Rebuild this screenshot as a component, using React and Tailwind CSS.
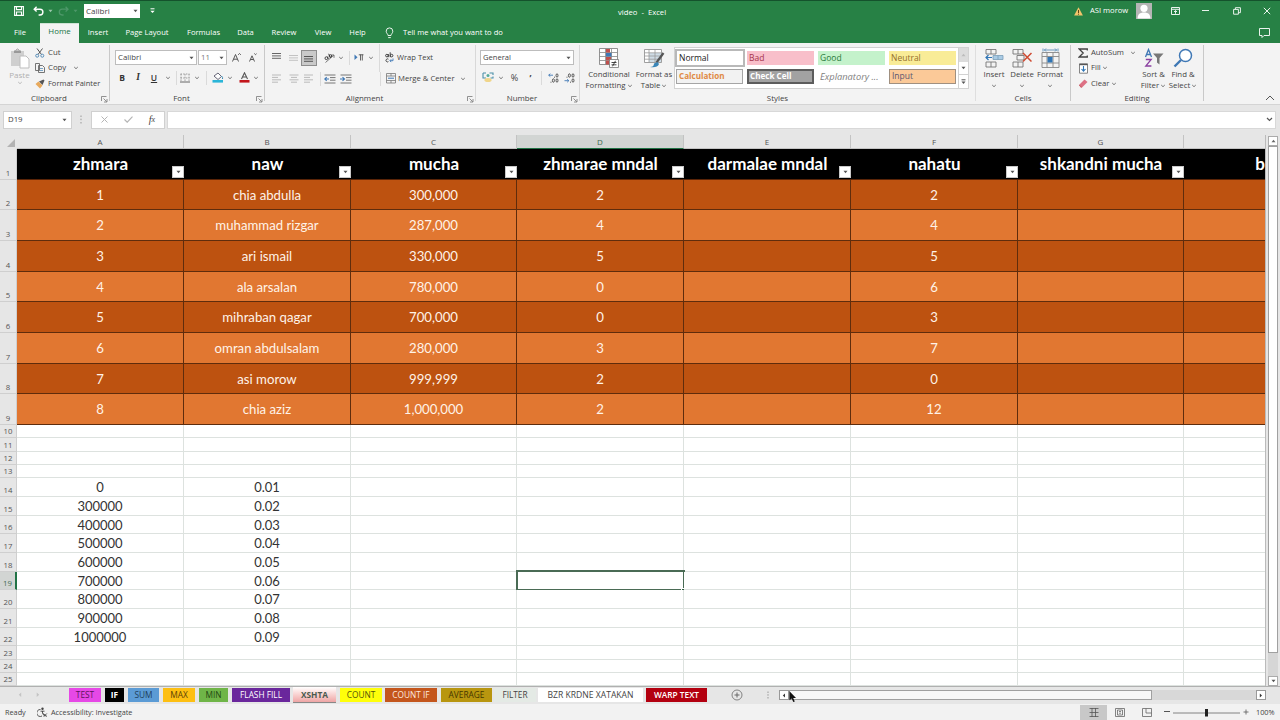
import React from "react";

const UI = "font-['Open_Sans','Noto_Sans',sans-serif]";
const CELL = "font-['Lato','Open_Sans',sans-serif]";

function Svg({ w, h, children, className = "" }) {
  return (
    <svg width={w} height={h} viewBox={`0 0 ${w} ${h}`} fill="none" className={`shrink-0 ${className}`}>
      {children}
    </svg>
  );
}

/* A centred slot of fixed width used in toolbars */
function Slot({ w, children, className = "" }) {
  return <div className={`flex shrink-0 items-center justify-center whitespace-nowrap ${w} ${className}`}>{children}</div>;
}

function Caret({ color = "#777" }) {
  return (
    <Svg w={6} h={4}>
      <path d="M1.2 1l1.8 1.7L4.8 1" stroke={color} strokeWidth="1" />
    </Svg>
  );
}

function Tri({ color = "#555" }) {
  return (
    <Svg w={5} h={4}>
      <path d="M0.5 0.7h4L2.5 3.2z" fill={color} />
    </Svg>
  );
}

function Launcher() {
  return (
    <Svg w={7} h={7}>
      <path d="M0.5 5V0.5H5.5M2.5 2.5l3.2 3.2M6 3v3H3" stroke="#777" strokeWidth="0.8" />
    </Svg>
  );
}

function Sep({ h = "h-[14px]" }) {
  return <div className={`w-px shrink-0 bg-[#dadada] ${h}`} />;
}

function Group({ w, label, launcher, line = "bg-[#c9c9c9]", children }) {
  return (
    <div className={`flex h-[61px] shrink-0 ${w}`}>
      <div className="flex min-w-0 flex-1 flex-col">
        <div className="h-[50px]">{children}</div>
        <div className="flex h-[10px] items-center">
          <div className={`flex-1 text-center text-[7.9px] leading-[10px] text-[#444] ${launcher ? "pr-[3px]" : ""}`}>{label}</div>
          {launcher && <div className="mr-px mt-[2px]"><Launcher /></div>}
        </div>
      </div>
      <div className={`mt-[2px] h-[56px] w-px ${line}`} />
    </div>
  );
}

function AlignIcon({ widths, y = 1, center, color = "#777" }) {
  return (
    <Svg w={10} h={10}>
      {widths.map((n, i) => (
        <rect key={i} x={center ? (10 - n) / 2 : 0} y={y + i * 2.4} width={n} height="1" fill={color} />
      ))}
    </Svg>
  );
}

function TitleBar() {
  return (
    <div className="flex h-[23px] items-center border-t border-[#14522c] pb-[2px] text-[7.6px] text-white">
      <Slot w="w-[38px]">
        <Svg w={10} h={10}>
          <path d="M0.6 0.6h8.8v8.8H0.6zM2.5 0.6v3h5v-3M2.5 9.4V6h5v3.4" stroke="#fff" strokeWidth="1.1" />
        </Svg>
      </Slot>
      <Svg w={12} h={10} className="-ml-[5px]">
        <path d="M3.6 0.8L1.2 3.2l2.4 2.4M1.4 3.2H7a2.8 2.8 0 010 5.8H5.6" stroke="#fff" strokeWidth="1.4" />
      </Svg>
      <Slot w="w-[10px]"><Tri color="#9cc8ad" /></Slot>
      <Svg w={12} h={10} className="ml-[3px]">
        <path d="M7.6 0.8L10 3.2 7.6 5.6M9.8 3.2H4.2a2.8 2.8 0 000 5.8h1.4" stroke="#4d9769" strokeWidth="1.3" />
      </Svg>
      <Slot w="w-[10px]"><Tri color="#4d9769" /></Slot>
      <div className="ml-[4px] flex h-[14px] w-[56px] items-center justify-between bg-white pl-[2px] pr-[2px] text-[8px] text-[#444]">
        <span>Calibri</span><Tri />
      </div>
      <Slot w="w-[25px]">
        <Svg w={5} h={6}>
          <path d="M0.5 0.8h4" stroke="#fff" strokeWidth="1" /><path d="M0.3 2.8h4.4L2.5 5z" fill="#fff" />
        </Svg>
      </Slot>
      <span className="ml-[453px] mt-[3px] w-[60px] shrink-0 whitespace-nowrap text-[7.7px]">video&nbsp; - &nbsp;Excel</span>
      <span className="ml-[396px]">
        <Svg w={9} h={9}><path d="M4.5 0.3L8.9 8.6H0.1z" fill="#f2c46b" /><path d="M4.5 3v3M4.5 6.7v1" stroke="#5b4516" strokeWidth="1" /></Svg>
      </span>
      <span className="ml-[7px] w-[46px] shrink-0 whitespace-nowrap">ASI morow</span>
      <div className="h-[16px] w-[16px] shrink-0 bg-[#b5b5b5]">
        <Svg w={16} h={16}><circle cx="8" cy="5.3" r="3.6" fill="#fff" /><path d="M1.6 15.5c0-4 2-6 6.4-6s6.4 2 6.4 6z" fill="#fff" /></Svg>
      </div>
      <Slot w="w-[46px]">
        <Svg w={9} h={8}><path d="M0.5 0.5h8v7h-8zM0.5 2.3h8M4.5 6.8V3.6M3 5l1.5-1.5L6 5" stroke="#e9f3ec" strokeWidth="1" /></Svg>
      </Slot>
      <Slot w="w-[15px]"><Svg w={7} h={8}><path d="M0 3.5h7" stroke="#e9f3ec" /></Svg></Slot>
      <Slot w="w-[47px]">
        <Svg w={8} h={8}><path d="M0.6 2.4h4.8v4.8H0.6zM2.4 2.2V0.7h5v5H5.6" stroke="#e9f3ec" strokeWidth="1" /></Svg>
      </Slot>
      <Slot w="w-[14px]"><Svg w={8} h={8}><path d="M0.8 0.8l6.4 6.4M7.2 0.8L0.8 7.2" stroke="#e9f3ec" strokeWidth="1" /></Svg></Slot>
    </div>
  );
}

const menu = [
  ["Insert", "w-[38px]"],
  ["Page Layout", "w-[60px]"],
  ["Formulas", "w-[53px]"],
  ["Data", "w-[31px]"],
  ["Review", "w-[46px]"],
  ["View", "w-[32px]"],
  ["Help", "w-[37px]"],
];

function MenuBar() {
  return (
    <div className="flex h-[20px] items-stretch text-[7.6px] text-white">
      <Slot w="w-[40px]" className="pb-px">File</Slot>
      <Slot w="w-[39px]" className="border-t border-[#cfe3d5] bg-[#f3f3f3] pb-[3px] text-[7.9px] text-[#217346]">Home</Slot>
      {menu.map(([t, w]) => <Slot key={t} w={w} className="pb-px">{t}</Slot>)}
      <Slot w="w-[27px]">
        <Svg w={9} h={12}><path d="M3 8.5C3 7 1.2 6.3 1.2 4.2a3.3 3.3 0 016.6 0C7.8 6.3 6 7 6 8.5zM3.2 10.6h2.6" stroke="#fff" strokeWidth="0.9" /></Svg>
      </Slot>
      <span className="flex flex-1 items-center whitespace-nowrap pb-px">Tell me what you want to do</span>
      <Slot w="w-[32px]" className="pb-px">
        <Svg w={11} h={10}><path d="M0.5 0.5h10v7H5L3 9.5v-2H0.5z" stroke="#fff" strokeWidth="0.9" /></Svg>
      </Slot>
    </div>
  );
}

function ClipboardGroup() {
  return (
    <Group w="w-[110px]" label="Clipboard" launcher>
      <div className="flex">
        <div className="ml-[4px] flex w-[31px] flex-col items-center pt-[5px] text-[8px] text-[#b0b0b0]">
          <Svg w={21} h={21}>
            <path d="M2 3h13v15H2z" fill="#cfcfcf" /><path d="M5 2.5h7V5H5z" fill="#999" /><path d="M6.5 2.5q2-3 4 0" stroke="#999" />
            <path d="M11 8h6l3 3v9h-9z" fill="#fff" stroke="#bdbdbd" />
          </Svg>
          <span className="mt-[1px] leading-[10px]">Paste</span>
          <span className="mt-[1px]"><Caret color="#bbb" /></span>
        </div>
        <div className="flex flex-col pt-[2px] text-[7.8px] text-[#444]">
          <div className="flex h-[15.5px] items-center">
            <Svg w={10} h={10}><path d="M2 0.5l4.5 6M7.5 0.5L3 6.5" stroke="#555" /><circle cx="2.2" cy="7.7" r="1.5" stroke="#5b8fb9" /><circle cx="7.3" cy="7.7" r="1.5" stroke="#5b8fb9" /></Svg>
            <span className="ml-[3px]">Cut</span>
          </div>
          <div className="flex h-[15.5px] items-center">
            <Svg w={10} h={10}><path d="M0.5 0.5h4v7h-4zM3.5 2.5h4l2 2v5h-6z" fill="#f3f3f3" stroke="#666" strokeWidth="0.9" /><path d="M5 5.5h3M5 7.5h3" stroke="#5b8fb9" strokeWidth="0.8" /></Svg>
            <span className="ml-[3px] w-[25px]">Copy</span><Caret />
          </div>
          <div className="flex h-[15.5px] items-center whitespace-nowrap">
            <Svg w={10} h={10}><path d="M0.5 5l3-2.5 4 4L5 9.5z" fill="#e8a95c" /><path d="M4 2.5L8.5 0.5l1 1L7.5 6z" fill="#555" /></Svg>
            <span className="ml-[3px] text-[7.5px]">Format Painter</span>
          </div>
        </div>
      </div>
    </Group>
  );
}

function FontGroup() {
  return (
    <Group w="w-[155px]" label="Font" launcher>
      <div className="flex items-center pt-[7px] text-[7.8px] text-[#444]">
        <div className="ml-[5px] flex h-[15px] w-[82px] items-center justify-between border border-[#bdbdbd] bg-white pl-[2px] pr-[2px]">
          <span>Calibri</span><Tri />
        </div>
        <div className="ml-px flex h-[15px] w-[29px] items-center justify-between border border-[#bdbdbd] bg-white pl-[2px] pr-[2px] text-[#777]">
          <span>11</span><Tri />
        </div>
        <Slot w="w-[18px]"><Svg w={9} h={9}><path d="M0.5 8.5L3.5 1.5l3 7M1.6 6.2h3.8M6.2 1.8L7.5 0.5 8.8 1.8" stroke="#555" /></Svg></Slot>
        <Slot w="w-[16px]"><Svg w={8} h={9}><path d="M0.5 8.5L3 2.8l2.5 5.7M1.5 6.5h3M5.3 0.5L6.5 1.7 7.7 0.5" stroke="#555" /></Svg></Slot>
      </div>
      <div className="flex items-center pt-[5px] text-[8.5px] leading-[15px] text-[#333]">
        <Slot w="w-[24px]" className="font-bold">B</Slot>
        <Slot w="w-[8px]" className="font-['Liberation_Serif',serif] text-[9.5px] font-bold italic">I</Slot>
        <Slot w="w-[24px]" className="font-semibold underline">U</Slot>
        <Slot w="w-[3px]"><Caret /></Slot>
        <Slot w="w-[15px]"><Sep /></Slot>
        <Svg w={10} h={10} className="-ml-[4px]"><path d="M0.5 1h9M0.5 5h9M1 1v8M5 1v8M9 1v8" stroke="#888" strokeDasharray="1.5 1.2" strokeWidth="0.8" /><path d="M0 9h10" stroke="#666" /></Svg>
        <Slot w="w-[14px]"><Caret /></Slot>
        <Slot w="w-[5px]"><Sep /></Slot>
        <Slot w="w-[18px]"><Svg w={12} h={11}><path d="M2 4l4-3 3.5 3.5L6 7.5z" fill="#fff" stroke="#667" /><path d="M9.5 4q1.6 1.5 1 3" stroke="#3a8bb5" /><path d="M0.5 8H11v2.6H0.5z" fill="#2bb5d8" /></Svg></Slot>
        <Slot w="w-[6px]"><Caret /></Slot>
        <Slot w="w-[22px]"><Svg w={11} h={11}><path d="M2.5 7L5.5 0.8 8.5 7M3.6 5h3.8" stroke="#555" strokeWidth="1.1" /><path d="M0.5 8h10v2.6h-10z" fill="#c3161c" /></Svg></Slot>
        <Slot w="w-[2px]"><Caret /></Slot>
      </div>
    </Group>
  );
}

function IndentIcon({ flip }) {
  return (
    <Svg w={12} h={10}>
      <path d="M0.5 1h11M6 3.6h5.5M6 6.2h5.5M0.5 9h11" stroke="#777" strokeWidth="1" />
      <path d={flip ? "M0 5h4M2.5 3.2L4.5 5 2.5 6.8" : "M1 5h4M2.7 3.2L0.8 5l1.9 1.8"} stroke="#3f78b5" strokeWidth="1.1" />
    </Svg>
  );
}

function AlignmentGroup() {
  return (
    <Group w="w-[211px]" label="Alignment" launcher line="bg-[#d8d8d8]">
      <div className="flex h-[29px] items-center text-[7.6px] text-[#444]">
        <Slot w="w-[24px]"><AlignIcon widths={[9, 9, 9]} y={0} color="#666" /></Slot>
        <Slot w="w-[10px]"><AlignIcon widths={[9, 9, 9]} y={2} color="#c2c2c2" /></Slot>
        <div className="ml-[2px] flex h-[16px] w-[16px] items-center justify-center border border-[#8d8d8d] bg-[#c9c9c9]"><AlignIcon widths={[9, 9, 9]} y={3} color="#555" /></div>
        <Slot w="w-[24px]">
          <Svg w={11} h={10}>
            <path d="M1.5 9.5L10 2M10 4.8V2H7.2" stroke="#777" />
            <circle cx="2.4" cy="5.2" r="1.4" stroke="#333" strokeWidth="0.9" /><path d="M3.4 3.6l1 2.2M4.6 0.8l2 4" stroke="#333" strokeWidth="0.9" /><circle cx="6.4" cy="3" r="1.3" stroke="#333" strokeWidth="0.9" />
          </Svg>
        </Slot>
        <Slot w="w-[2px]" className="-ml-px"><Caret /></Slot>
        <Slot w="w-[14px]"><Sep /></Slot>
        <Slot w="w-[6px]"><Svg w={10} h={8}><path d="M0.5 0.5V6l3-2.8z" fill="#3f78b5" /><path d="M6.5 0.5v6M8.3 0.5v6M4.8 0.8h4.7" stroke="#555" strokeWidth="0.9" /></Svg></Slot>
        <Slot w="w-[18px]"><Caret /></Slot>
        <Slot w="w-px" className="-ml-px"><Sep h="h-[28px]" /></Slot>
        <Slot w="w-[18px]">
          <Svg w={9} h={11}>
            <circle cx="1.9" cy="3.6" r="1.3" stroke="#333" strokeWidth="0.9" /><path d="M3.3 2v3.2M5.2 0.3v4.9" stroke="#333" strokeWidth="0.9" /><circle cx="6.6" cy="3.6" r="1.3" stroke="#333" strokeWidth="0.9" />
            <path d="M3.4 7.2a1.5 1.5 0 100 2.4" stroke="#333" strokeWidth="0.9" /><path d="M8 6.5v2.2H5M6.2 7.3L4.9 8.7l1.3 1.4" stroke="#3f78b5" strokeWidth="0.9" />
          </Svg>
        </Slot>
        <span className="-ml-[1px] whitespace-nowrap">Wrap Text</span>
      </div>
      <div className="flex h-[13px] items-center text-[7.6px] text-[#444]">
        <Slot w="w-[24px]"><AlignIcon widths={[9, 6, 9, 6]} y={0.5} color="#bbb" /></Slot>
        <Slot w="w-[10px]"><AlignIcon widths={[9, 6, 9, 6]} center y={0.5} color="#bbb" /></Slot>
        <Slot w="w-[20px]"><AlignIcon widths={[9, 6, 9, 6]} y={0.5} color="#bbb" /></Slot>
        <Slot w="w-[3px]"><Sep /></Slot>
        <Slot w="w-[16px]"><IndentIcon /></Slot>
        <Slot w="w-[16px]"><IndentIcon flip /></Slot>
        <div className="ml-[26px]"><Sep /></div>
        <Svg w={10} h={11} className="ml-[5px]"><path d="M0.5 0.5h9V10h-9zM0.5 3h9M0.5 7.5h9M5 0.5V3M5 7.5V10" stroke="#777" strokeWidth="0.8" /><path d="M2 5.2h6" stroke="#3f78b5" /></Svg>
        <span className="ml-[2px] w-[62px] whitespace-nowrap text-[7.7px]">Merge &amp; Center</span><Caret />
      </div>
    </Group>
  );
}

/* Decimal-places icon: an arrow with rows of zeros */
function DecimalIcon({ more }) {
  return (
    <Svg w={11} h={10}>
      {more ? (
        <>
          <path d="M5 2.2H0.7M2.3 0.7L0.7 2.2l1.6 1.5" stroke="#3f78b5" strokeWidth="0.9" />
          <path d="M6.2 4.2H7M2.6 9.2h0.8" stroke="#333" strokeWidth="1" />
          <ellipse cx="9" cy="2.5" rx="1" ry="1.7" stroke="#333" strokeWidth="0.8" /><ellipse cx="5.4" cy="7.5" rx="1" ry="1.7" stroke="#333" strokeWidth="0.8" /><ellipse cx="9" cy="7.5" rx="1" ry="1.7" stroke="#333" strokeWidth="0.8" />
        </>
      ) : (
        <>
          <path d="M0.5 7.7h4.3M3.2 6.2l1.6 1.5-1.6 1.5" stroke="#3f78b5" strokeWidth="0.9" />
          <path d="M2.6 4.2h0.8M6.2 9.2H7" stroke="#333" strokeWidth="1" />
          <ellipse cx="5.4" cy="2.5" rx="1" ry="1.7" stroke="#333" strokeWidth="0.8" /><ellipse cx="9" cy="2.5" rx="1" ry="1.7" stroke="#333" strokeWidth="0.8" /><ellipse cx="9" cy="7.5" rx="1" ry="1.7" stroke="#333" strokeWidth="0.8" />
        </>
      )}
    </Svg>
  );
}

function NumberGroup() {
  return (
    <Group w="w-[104px]" label="Number" launcher line="bg-[#d8d8d8]">
      <div className="pt-[7px]">
        <div className="ml-[4px] flex h-[15px] w-[94px] items-center justify-between border border-[#bdbdbd] bg-white pl-[2px] pr-[2px] text-[7.6px] text-[#444]">
          <span>General</span><Tri />
        </div>
      </div>
      <div className="flex items-center pt-[5px] text-[9px] leading-[15px] text-[#444]">
        <Slot w="w-[24px]"><Svg w={12} h={11}><path d="M1 1h3M7.5 1H11v2M1 1v5h3M11 4.5V6H8.5" stroke="#4a8fa8" strokeWidth="1.1" /><circle cx="6" cy="3.6" r="1.5" fill="#5a9" /><ellipse cx="6" cy="8" rx="3.6" ry="2" fill="#f0d58a" /></Svg></Slot>
        <Slot w="w-[2px]"><Caret /></Slot>
        <Slot w="w-[25px]">%</Slot>
        <Slot w="w-[7px]" className="font-bold">’</Slot>
        <Slot w="w-[14px]"><Sep /></Slot>
        <DecimalIcon more />
        <div className="w-[5px]" />
        <DecimalIcon />
      </div>
    </Group>
  );
}

function BigButton({ icon, lines, w, caretLine }) {
  return (
    <div className={`flex shrink-0 flex-col items-center whitespace-nowrap pt-[4px] text-[7.8px] leading-[11px] text-[#444] ${w}`}>
      <div className="flex h-[22px] items-center">{icon}</div>
      <span>{lines[0]}</span>
      {caretLine ? <span className="flex h-[11px] items-center"><Caret /></span> : <span className="flex items-center gap-[1px]">{lines[1]}<Caret /></span>}
    </div>
  );
}

function StylesGroup() {
  return (
    <Group w="w-[396px]" label="Styles" line="bg-[#dedede]">
      <div className="flex">
        <BigButton w="w-[58px]" lines={["Conditional", "Formatting"]} icon={
          <Svg w={20} h={20}>
            <path d="M0.5 0.5h18v16h-18z" fill="#fff" stroke="#777" strokeWidth="0.8" />
            <path d="M0.5 4.5h18M0.5 8.5h18M0.5 12.5h18M6.5 0.5v16M12.5 0.5v16" stroke="#888" strokeWidth="0.8" />
            <path d="M7 1h4v3.5H7zM7 9h5v3.5H7zM7 13h3v3.5H7z" fill="#c0504d" /><path d="M7 5h5.5v3.5H7z" fill="#3f78b5" />
            <path d="M10.5 11.5h9v8h-9z" fill="#fff" stroke="#777" strokeWidth="0.8" /><path d="M12.5 14.5h5M12.5 16.8h5M16.5 12.8l-3 5.5" stroke="#333" strokeWidth="0.9" />
          </Svg>} />
        <BigButton w="w-[32px]" lines={["Format as", "Table"]} icon={
          <Svg w={21} h={20}>
            <path d="M0.5 1.5h17v13h-17z" fill="#fff" stroke="#888" strokeWidth="0.8" /><path d="M5 5h12v9H5z" fill="#cfdce6" />
            <path d="M0.5 4.8h17M0.5 8h17M0.5 11.2h17M5 1.5v13M11 1.5v13" stroke="#999" strokeWidth="0.8" />
            <path d="M19.5 5l-7 9.5" stroke="#555" strokeWidth="2.2" /><path d="M6 19q4 0 4-3.5l3.5-1.5 1.5 2q-1.5 4-9 3z" fill="#3a86b8" />
          </Svg>} />
        <div className="ml-[4px] mt-[4px] flex h-[42px] w-[295px] border border-[#d2d2d2] bg-white text-[8.5px]">
          <div className="grid w-[283px] grid-cols-[72px_71px_71px_69px] grid-rows-[20px_20px]">
            <div className="mt-px flex h-[18px] w-[70px] items-center border-2 border-[#b9b9b9] bg-white pl-[2px] text-[#222]">Normal</div>
            <div className="mt-[3px] flex h-[14px] w-[67px] items-center bg-[#f8bfca] pl-[2px] text-[#a5324a]">Bad</div>
            <div className="mt-[3px] flex h-[14px] w-[67px] items-center bg-[#c4f2cb] pl-[2px] text-[#2b7a3b]">Good</div>
            <div className="mt-[3px] flex h-[14px] w-[67px] items-center bg-[#f9ec97] pl-[2px] text-[#95702a]">Neutral</div>
            <div className="ml-px mt-px flex h-[15px] w-[67px] items-center border border-[#a5a5a5] bg-[#f2f2f2] pl-[2px] text-[8.1px] font-bold text-[#e08a45]">Calculation</div>
            <div className="mt-px flex h-[15px] w-[67px] items-center border-2 border-[#5c5c5c] bg-[#a2a2a2] pl-px text-[8.1px] font-bold text-white">Check Cell</div>
            <div className="mt-px flex h-[15px] w-[67px] items-center whitespace-nowrap pl-[2px] text-[9.3px] italic text-[#808080]">Explanatory ...</div>
            <div className="mt-px flex h-[15px] w-[67px] items-center border border-[#a09080] bg-[#fbc998] pl-[2px] text-[#5d5670]">Input</div>
          </div>
          <div className="flex flex-1 flex-col border-l border-[#d2d2d2]">
            <Slot w="w-full" className="h-[14px] bg-[#dcdcdc]"><Svg w={5} h={4}><path d="M0.5 3.2h4L2.5 0.7z" fill="#bbb" /></Svg></Slot>
            <Slot w="w-full" className="h-[13px] border-b border-[#d2d2d2]"><Tri /></Slot>
            <Slot w="w-full" className="h-[13px]"><Svg w={5} h={6}><path d="M0.5 0.8h4" stroke="#555" /><path d="M0.5 2.5h4L2.5 5z" fill="#555" /></Svg></Slot>
          </div>
        </div>
      </div>
    </Group>
  );
}

function CellsGroup() {
  return (
    <Group w="w-[95px]" label="Cells" line="bg-[#c9c9c9]">
      <div className="flex pl-[4px]">
        <BigButton caretLine w="w-[28px]" lines={["Insert"]} icon={
          <Svg w={19} h={19}>
            <path d="M1 0.5h10V5H1zM6 0.5V5M1 13h10v5H1zM6 13v5" stroke="#777" strokeWidth="0.9" />
            <path d="M8 6.5h10v4H8zM13 6.5v4" fill="#a9cbe4" stroke="#7a9db8" strokeWidth="0.8" /><path d="M7 8.5H1M3.5 6L1 8.5 3.5 11" stroke="#2f75b5" strokeWidth="1.2" />
          </Svg>} />
        <BigButton caretLine w="w-[28px]" lines={["Delete"]} icon={
          <Svg w={20} h={19}>
            <path d="M1 0.5h10V5H1zM6 0.5V5M1 13h10v5H1zM6 13v5M5 6.5h7V11H5z" stroke="#777" strokeWidth="0.9" />
            <path d="M11 4l8.5 8.5M19.5 4L11 12.5" stroke="#cf4a31" strokeWidth="1.5" />
          </Svg>} />
        <BigButton caretLine w="w-[28px]" lines={["Format"]} icon={
          <Svg w={19} h={20}>
            <path d="M1 4.5h17v15H1zM1 8.5h17M1 15h17M6 4.5v15M12 4.5v15" stroke="#888" strokeWidth="0.9" />
            <path d="M6.5 9h5v5.5h-5z" fill="#2f75b5" /><path d="M2 0.5v3M17 0.5v3M3 2h13M5 0.5L3.5 2 5 3.5M14 0.5L15.5 2 14 3.5" stroke="#5b8fb9" strokeWidth="0.9" />
          </Svg>} />
      </div>
    </Group>
  );
}

function EditingGroup() {
  return (
    <Group w="w-[133px]" label="Editing" line="bg-[#c9c9c9]">
      <div className="flex">
        <div className="flex w-[67px] flex-col pl-[7px] pt-[2px] text-[7.7px] text-[#444]">
          <div className="flex h-[15.5px] items-center">
            <Svg w={11} h={10}><path d="M9.3 2.5V1H1.2l4 4-4 4h8.1V7.5" stroke="#444" strokeWidth="1.3" /></Svg>
            <span className="ml-[2px] w-[39px] whitespace-nowrap">AutoSum</span><Caret />
          </div>
          <div className="flex h-[15.5px] items-center">
            <Svg w={11} h={11}><path d="M1.5 0.8h8v9.4h-8z" fill="#fff" stroke="#777" strokeWidth="0.9" /><path d="M1.5 1.5h8" stroke="#555" strokeWidth="1.4" /><path d="M5.5 3v5M3.5 6l2 2.2 2-2.2" stroke="#2f75b5" strokeWidth="1.1" /></Svg>
            <span className="ml-[2px] mr-px">Fill</span><Caret />
          </div>
          <div className="flex h-[15.5px] items-center">
            <Svg w={11} h={9}><path d="M1 6l5.5-5.5L9.5 3 4 8.500H2.5z" fill="#dd7184" /><path d="M1 6l3 2.5" stroke="#b55" strokeWidth="0.7" /></Svg>
            <span className="ml-[2px] mr-px">Clear</span><Caret />
          </div>
        </div>
        <BigButton w="w-[31px]" lines={["Sort &", "Filter"]} icon={
          <Svg w={20} h={20}>
            <path d="M1.500 9L4.500 1.500 7.500 9M2.500 6.500h4" stroke="#3f78b5" strokeWidth="1.3" /><path d="M1.800 11.500h5.400L1.800 18h5.600" stroke="#8a3fa0" strokeWidth="1.3" />
            <path d="M9 5.500h10.500l-4 4.500v6.500l-2.500-2V10z" fill="#777" />
          </Svg>} />
        <BigButton w="w-[28px]" lines={["Find &", "Select"]} icon={
          <Svg w={20} h={20}><circle cx="12.5" cy="7.5" r="6" fill="#fff" stroke="#3f78b5" strokeWidth="1.5" /><path d="M8 12l-6.500 6.500" stroke="#3f78b5" strokeWidth="2.4" /></Svg>} />
      </div>
    </Group>
  );
}

function Ribbon() {
  return (
    <div className="flex h-[61px] bg-[#f3f3f3]">
      <ClipboardGroup /><FontGroup /><AlignmentGroup /><NumberGroup /><StylesGroup /><CellsGroup /><EditingGroup />
      <div className="flex flex-1 items-end justify-end pb-[3px] pr-[5px]">
        <Svg w={10} h={6}><path d="M1 5l4-4 4 4" stroke="#555" /></Svg>
      </div>
    </div>
  );
}

function FormulaBar() {
  return (
    <div className="flex h-[31px] items-center border-t border-[#d4d4d4] pb-px text-[7.8px] text-[#444]">
      <div className="ml-[3px] flex h-[18px] w-[69px] items-center justify-between border border-[#d0d0d0] bg-white pl-[4px] pr-[4px]"><span className="pt-px">D19</span><Tri /></div>
      <Slot w="w-[19px]"><Svg w={3} h={9}><path d="M1 0.5V2M1 3.7v1.5M1 7v1.5" stroke="#999" /></Svg></Slot>
      <div className="flex h-[18px] w-[74px] items-center border border-[#d0d0d0] bg-white">
        <Slot w="w-[24px]"><Svg w={7} h={7}><path d="M0.5 0.5l6 6M6.5 0.5l-6 6" stroke="#b5b5b5" /></Svg></Slot>
        <Slot w="w-[24px]"><Svg w={9} h={7}><path d="M0.5 3.5l2.7 2.7L8.5 0.6" stroke="#b5b5b5" strokeWidth="1.2" /></Svg></Slot>
        <Slot w="w-[24px]" className="font-['Liberation_Serif',serif] text-[10px] italic">f<span className="text-[8px]">x</span></Slot>
      </div>
      <div className="ml-[2px] flex h-[18px] w-[1109px] items-center justify-end border border-[#d8d8d8] bg-white pr-[2px]"><Svg w={7} h={5}><path d="M1 1l2.5 2.5L6 1" stroke="#555" strokeWidth="1.2" /></Svg></div>
    </div>
  );
}

/* Column letter, width, heading text */
const columns = [
  { id: "A", w: "w-[167px]", title: "zhmara" },
  { id: "B", w: "w-[167px]", title: "naw" },
  { id: "C", w: "w-[166px]", title: "mucha" },
  { id: "D", w: "w-[167px]", title: "zhmarae mndal" },
  { id: "E", w: "w-[167px]", title: "darmalae mndal" },
  { id: "F", w: "w-[167px]", title: "nahatu" },
  { id: "G", w: "w-[166px]", title: "shkandni mucha" },
];

const dataRows = [
  { n: 2, h: "h-[30px]", v: ["1", "chia abdulla", "300,000", "2", "", "2", ""] },
  { n: 3, h: "h-[31px]", v: ["2", "muhammad rizgar", "287,000", "4", "", "4", ""] },
  { n: 4, h: "h-[31px]", v: ["3", "ari ismail", "330,000", "5", "", "5", ""] },
  { n: 5, h: "h-[30px]", v: ["4", "ala arsalan", "780,000", "0", "", "6", ""] },
  { n: 6, h: "h-[31px]", v: ["5", "mihraban qagar", "700,000", "0", "", "3", ""] },
  { n: 7, h: "h-[31px]", v: ["6", "omran abdulsalam", "280,000", "3", "", "7", ""] },
  { n: 8, h: "h-[30px]", v: ["7", "asi morow", "999,999", "2", "", "0", ""] },
  { n: 9, h: "h-[31px]", v: ["8", "chia aziz", "1,000,000", "2", "", "12", ""] },
];

const plainRows = [
  { n: 10, h: "h-[13px]" },
  { n: 11, h: "h-[14px]" },
  { n: 12, h: "h-[13px]" },
  { n: 13, h: "h-[13px]" },
  { n: 14, h: "h-[19px]", a: "0", b: "0.01" },
  { n: 15, h: "h-[19px]", a: "300000", b: "0.02" },
  { n: 16, h: "h-[18px]", a: "400000", b: "0.03" },
  { n: 17, h: "h-[19px]", a: "500000", b: "0.04" },
  { n: 18, h: "h-[19px]", a: "600000", b: "0.05" },
  { n: 19, h: "h-[18px]", a: "700000", b: "0.06" },
  { n: 20, h: "h-[19px]", a: "800000", b: "0.07" },
  { n: 21, h: "h-[19px]", a: "900000", b: "0.08" },
  { n: 22, h: "h-[18px]", a: "1000000", b: "0.09" },
  { n: 23, h: "h-[14px]" },
  { n: 24, h: "h-[13px]" },
  { n: 25, h: "h-[13px]" },
];

function RowNumber({ n, selected, h }) {
  return (
    <div className={`flex w-[17px] shrink-0 items-end justify-center border-b border-r border-[#cfcfcf] text-[7.8px] leading-[11px] ${h} ${selected ? "border-r-2 border-r-[#217346] bg-[#d2d5d3] text-[#3f6b50]" : "text-[#555]"}`}>
      {n}
    </div>
  );
}

function Sheet() {
  return (
    <div className="flex h-[551px]">
      <div className="flex w-[1265px] flex-col overflow-hidden">
        <div className="flex h-[14px] shrink-0 text-[8px] text-[#555]">
          <div className="flex w-[17px] shrink-0 items-end justify-end pb-[2px] pr-[2px]"><Svg w={8} h={8}><path d="M8 0v8H0z" fill="#b3b3b3" /></Svg></div>
          {columns.map((c) => (
            <div key={c.id} className={`flex shrink-0 items-center justify-center border-r border-b border-[#c3c3c3] ${c.w} ${c.id === "D" ? "border-b-[#217346] bg-[#d2d5d3] text-[#3f6b50]" : ""}`}>{c.id}</div>
          ))}
          <div className="flex-1 border-b border-[#c3c3c3]" />
        </div>
        <div className="flex h-[31px] shrink-0">
          <RowNumber n={1} h="h-[31px]" />
          {columns.map((c) => (
            <div key={c.id} className={`relative flex shrink-0 items-center justify-center whitespace-nowrap border-b border-[#5a2407] bg-black text-[17px] font-bold text-white ${CELL} ${c.w}`}>
              {c.title}
              <span className="absolute bottom-px right-0 flex h-[12px] w-[12px] items-center justify-center border border-[#c9c9c9] bg-white"><Tri /></span>
            </div>
          ))}
          <div className={`flex w-[81px] shrink-0 items-center justify-end overflow-hidden border-b border-[#5a2407] bg-black text-[17px] font-bold text-white ${CELL}`}>b</div>
        </div>
        {dataRows.map((r, i) => (
          <div key={r.n} className={`flex shrink-0 ${r.h}`}>
            <RowNumber n={r.n} h={r.h} />
            {columns.map((c, k) => (
              <div key={c.id} className={`flex shrink-0 items-center justify-center whitespace-nowrap border-b border-r border-[#5f2c0c] pt-[2px] text-[13.2px] text-[#fff3e8] ${CELL} ${c.w} ${i % 2 ? "bg-[#e17731]" : "bg-[#bd5210]"}`}>{r.v[k]}</div>
            ))}
            <div className={`flex-1 border-b border-[#5f2c0c] ${i % 2 ? "bg-[#e17731]" : "bg-[#bd5210]"}`} />
          </div>
        ))}
        {plainRows.map((r) => (
          <div key={r.n} className={`flex shrink-0 ${r.h}`}>
            <RowNumber n={r.n} h={r.h} selected={r.n === 19} />
            {columns.map((c, k) => (
              <div key={c.id} className={`relative flex shrink-0 items-center justify-center border-b border-r border-[#dde2df] bg-white pt-px text-[13px] leading-none text-[#333] ${CELL} ${c.w}`}>
                {k === 0 ? r.a : k === 1 ? r.b : null}
                {r.n === 19 && c.id === "D" && (
                  <div className="absolute -left-px -top-[2px] h-[21px] w-[169px] border-2 border-[#4a6b55]">
                    <span className="absolute -bottom-[3px] -right-[2px] h-[4px] w-[4px] border-l border-t border-white bg-[#2f5a3e]" />
                  </div>
                )}
              </div>
            ))}
            <div className="flex-1 border-b border-[#dde2df] bg-white" />
          </div>
        ))}
      </div>
      <div className="flex w-[15px] flex-col items-center border-l border-[#bbb] pt-px">
        <Slot w="w-[10px]" className="h-[10px] border border-[#ababab] bg-white"><Svg w={5} h={4}><path d="M0.5 3.2h4L2.5 0.7z" fill="#666" /></Svg></Slot>
        <div className="h-[507px] w-[10px] border border-[#a0a0a0] bg-white" />
        <div className="h-[23px] w-[10px] bg-[#d6d6d6]" />
        <Slot w="w-[10px]" className="h-[10px] border border-[#ababab] bg-white"><Tri /></Slot>
      </div>
    </div>
  );
}

const tabs = [
  ["TEST", "w-[32px] mr-[4px] bg-[#e648e6] text-[#5b1460]"],
  ["IF", "w-[19px] mr-[4px] bg-black text-white font-bold"],
  ["SUM", "w-[31px] mr-[4px] bg-[#5b9bd5] text-[#1f3f5c]"],
  ["MAX", "w-[32px] mr-[4px] bg-[#fdbf12] text-[#5a4206]"],
  ["MIN", "w-[29px] mr-[4px] bg-[#6fb548] text-[#234a12]"],
  ["FLASH FILL", "w-[58px] mr-[3px] bg-[#6a279c] text-white"],
];
const tabs2 = [
  ["COUNT", "w-[42px] mr-[3px] bg-[#ffff0a] text-[#55550a]"],
  ["COUNT IF", "w-[52px] mr-[4px] bg-[#c4561c] text-[#fdeadf]"],
  ["AVERAGE", "w-[51px] mr-[2px] bg-[#b8960f] text-[#453700]"],
  ["FILTER", "w-[42px] mr-[2px] bg-[#e4eae5] text-[#444]"],
  ["BZR KRDNE XATAKAN", "w-[105px] mr-[3px] bg-white text-[#444] text-[8.6px]"],
  ["WARP TEXT", "w-[61px] bg-[#b30010] text-white font-semibold"],
];

function TabRow({ items }) {
  return (
    <div className="flex items-center">
      {items.map(([t, c]) => (
        <div key={t} className={`flex h-[14px] shrink-0 items-center justify-center whitespace-nowrap ${c}`}>{t}</div>
      ))}
    </div>
  );
}

function SheetTabs() {
  return (
    <div className="flex h-[18px] border-t border-[#b0b0b0] pb-px text-[8.3px] leading-[12px]">
      <Slot w="w-[69px]" className="gap-[14px] pr-[12px]">
        <Svg w={4} h={6}><path d="M3.2 0.5V5L0.7 2.7z" fill="#c4c4c4" /></Svg>
        <Svg w={4} h={6}><path d="M0.7 0.5V5l2.5-2.3z" fill="#c4c4c4" /></Svg>
      </Slot>
      <TabRow items={tabs} />
      <div className="mr-[4px] flex h-[16px] w-[43px] items-center justify-center border-b border-[#888] bg-linear-to-b from-white to-[#eea5a5] font-bold text-[#4a5a4e]">XSHTA</div>
      <TabRow items={tabs2} />
      <Slot w="w-[59px]"><Svg w={12} h={12}><circle cx="6" cy="6" r="5" stroke="#777" strokeWidth="0.9" /><path d="M6 3.5v5M3.5 6h5" stroke="#666" /></Svg></Slot>
      <Slot w="w-[5px]"><Svg w={3} h={8}><path d="M1 0.5V2M1 3.2v1.5M1 6v1.5" stroke="#999" /></Svg></Slot>
      <div className="ml-[8px] flex items-center">
        <Slot w="w-[10px]" className="h-[10px] border border-[#999] bg-white"><Svg w={4} h={5}><path d="M3 0.5v4l-2.2-2z" fill="#333" /></Svg></Slot>
        <div className="relative h-[10px] w-[363px] border border-[#a0a0a0] bg-[#f8f8f8]">
          <Svg w={8} h={12} className="absolute -left-px top-0"><path d="M0.5 0.3v9l2.2-1.9 1.6 3.7 1.5-0.7-1.6-3.5H7z" fill="#111" /></Svg>
        </div>
        <div className="h-[10px] w-[104px] bg-[#d8d8d8]" />
        <Slot w="w-[10px]" className="h-[10px] border border-[#999] bg-white"><Svg w={4} h={5}><path d="M0.8 0.5v4l2.2-2z" fill="#333" /></Svg></Slot>
      </div>
    </div>
  );
}

function StatusBar() {
  return (
    <div className="flex h-[16px] items-center bg-[#f2f2f2] text-[7.3px] text-[#444]">
      <span className="ml-[5px] w-[32px]">Ready</span>
      <Svg w={11} h={10}><circle cx="5.5" cy="1.7" r="1.2" fill="#444" /><path d="M3.5 2.5A3.5 3.5 0 105 9M3.5 4.2h4M5.5 4v2.5L8 9.5M6 6.5l4 3M9.8 6.5l-3 3" stroke="#444" strokeWidth="0.9" /></Svg>
      <span className="ml-[3px] w-[1029px] whitespace-nowrap">Accessibility: Investigate</span>
      <Slot w="w-[27px]" className="h-[15px] bg-[#c8c8c8]"><Svg w={10} h={9}><path d="M0.5 0.5h9M0.5 4.5h9M0.5 8.5h9M3 0v9M6.5 0v9" stroke="#555" strokeWidth="0.8" /></Svg></Slot>
      <Slot w="w-[26px]"><Svg w={10} h={9}><path d="M0.5 0.5h9v8h-9zM2.5 2h5v5h-5zM4 3.5h2M4 5.2h2" stroke="#666" strokeWidth="0.8" /></Svg></Slot>
      <Slot w="w-[28px]"><Svg w={10} h={9}><path d="M0.5 0.5h9v8h-9zM4 0.5V5h5.5" stroke="#666" strokeWidth="0.8" /></Svg></Slot>
      <Slot w="w-[12px]"><Svg w={6} h={4}><path d="M0 1.5h6" stroke="#555" /></Svg></Slot>
      <Svg w={67} h={9}><path d="M0 5h67" stroke="#777" strokeWidth="0.9" /><path d="M32 1h3v7.5h-3z" fill="#222" /></Svg>
      <Slot w="w-[12px]"><Svg w={6} h={6}><path d="M0.5 3h5M3 0.5v5" stroke="#666" strokeWidth="0.9" /></Svg></Slot>
      <span className="ml-[4px]">100%</span>
    </div>
  );
}

export default function App() {
  return (
    <div className={`h-[720px] w-[1280px] overflow-hidden bg-[#e6e6e6] ${UI}`}>
      <div className="bg-[#278145]"><TitleBar /><MenuBar /></div>
      <Ribbon />
      <FormulaBar />
      <Sheet />
      <SheetTabs />
      <StatusBar />
    </div>
  );
}
